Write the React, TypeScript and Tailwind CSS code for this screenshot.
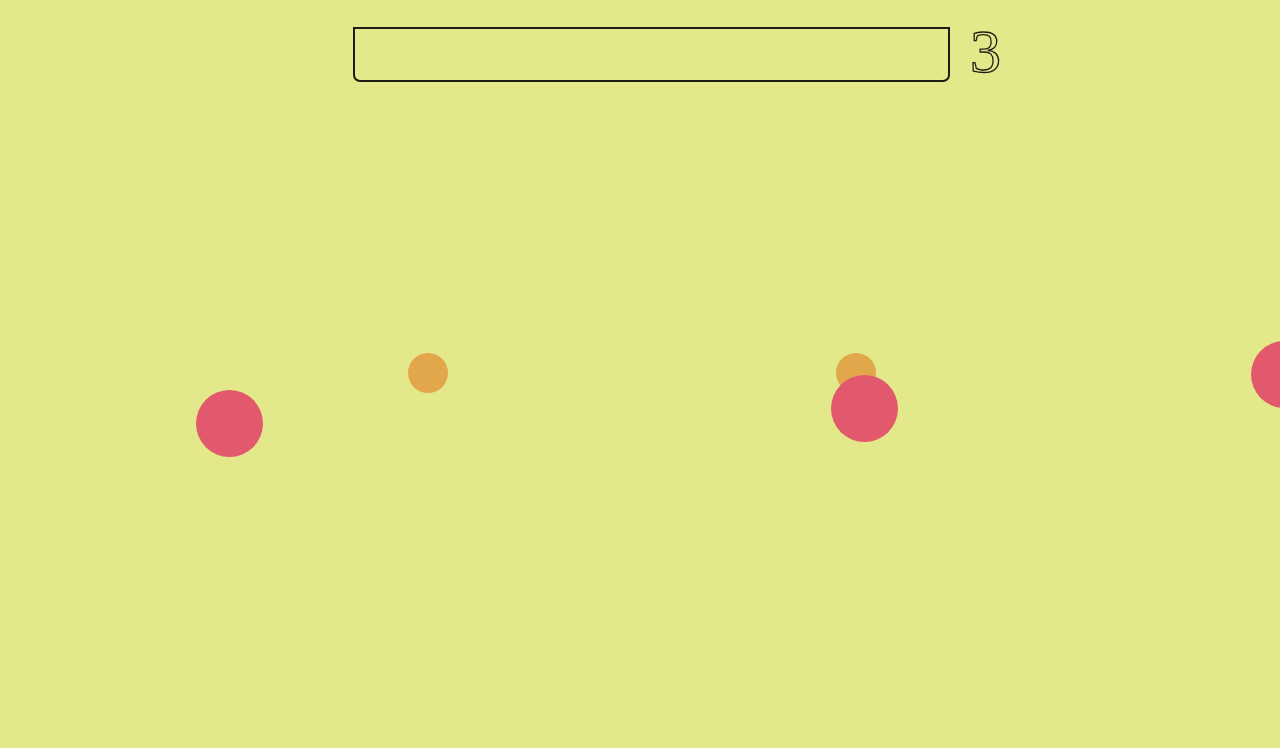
import React from 'react';

const balls = [
  { x: 229.5, y: 423, d: 67, color: 'bg-[#e2596e]' },
  { x: 428, y: 373, d: 40, color: 'bg-[#e3a74b]' },
  { x: 856, y: 373, d: 40, color: 'bg-[#e3a74b]' },
  { x: 864, y: 408, d: 67, color: 'bg-[#e2596e]' },
  { x: 1284, y: 374, d: 67, color: 'bg-[#e2596e]' },
];

export default function App() {
  return (
    <div className="relative w-full h-[748px] overflow-hidden bg-[#e3e98a]">
      {/* Top bar: progress box + level */}
      <div className="flex items-start pl-[353px] pt-[27px] gap-[20px]">
        <div className="w-[597px] h-[55px] border-2 border-[#1c1c14] rounded-b-[7px]" />
        <span
          className="text-[62px] leading-[50px] text-transparent [-webkit-text-stroke:1.3px_#1c1c14] -mt-[1px]"
          style={{ fontFamily: '"Liberation Serif", "DejaVu Serif", serif' }}
        >
          3
        </span>
      </div>

      {/* Balls */}
      {balls.map((b, i) => (
        <div
          key={i}
          className={`absolute rounded-full ${b.color}`}
          style={{ left: b.x - b.d / 2, top: b.y - b.d / 2, width: b.d, height: b.d }}
        />
      ))}
    </div>
  );
}
